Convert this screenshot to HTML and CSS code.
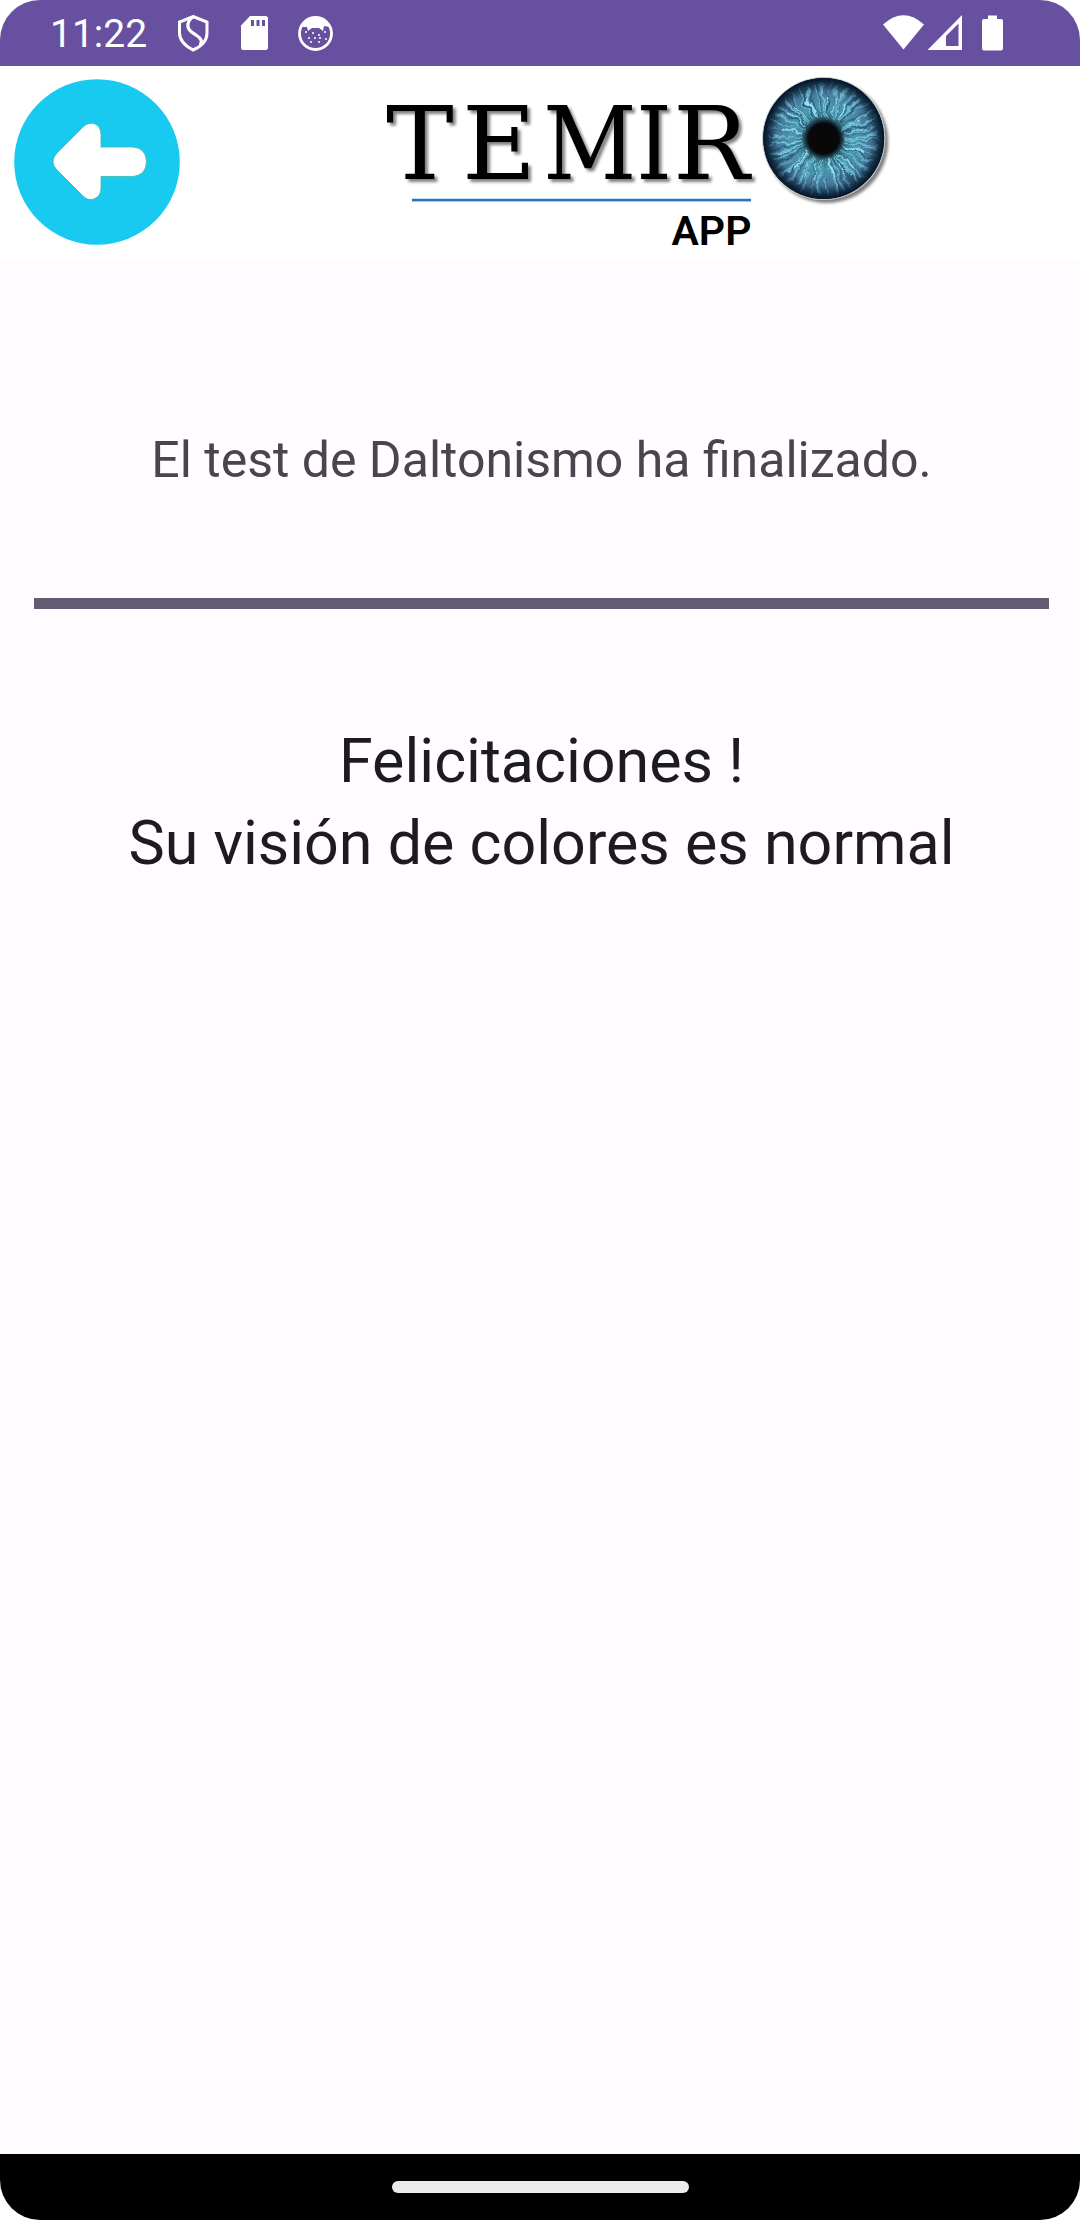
FILE: index.html
```html
<!DOCTYPE html>
<html lang="es">
<head>
<meta charset="utf-8">
<title>Temiro App</title>
<link rel="stylesheet" href="styles.css">
</head>
<body>
<div class="screen">
  <div class="status">
    <span class="time">11:22</span>
    <svg class="left-icons" width="160" height="40" viewBox="174 12 160 40">
      <path d="M193 16.500 L207 22 V33 Q207 44 193 50 Q179.500 43 179.500 33 V22 Z" fill="none" stroke="#fff" stroke-width="3"/>
      <path d="M193 17 Q187 21 188 27 Q189 31 196 35 Q204 40 200 45" fill="none" stroke="#fff" stroke-width="3.200"/>
      <path d="M250 16 H265.500 Q268 16 268 18.500 V47.500 Q268 50 265.500 50 H243.500 Q241 50 241 47.500 V25.500 Z" fill="#fff"/>
      <path d="M251 20h3v6h-3z M256.500 20h3v6h-3z M262 20h3v6h-3z" fill="#6750a0"/>
      <circle cx="315.500" cy="33.500" r="16" fill="none" stroke="#fff" stroke-width="2.800"/>
      <path d="M301 27 Q305 17 315 17 Q327 17 330 27 L324 26 L323 31 L319 28 H312 L308 31 L307 27 Z" fill="#fff"/>
      <path d="M305 32h2m1 6h2m2-5h2m4 2h2m4-3h2m-1 7h2m-9 3h2m-10 0h2m2-4h2m3 0h2" stroke="#fff" stroke-width="1.500"/>
    </svg>
    <svg class="right-icons" width="124" height="40" viewBox="880 12 124 40" fill="#fff">
      <path d="M883 24.500 Q903.500 6 924 24.500 L903.500 49.500 Z"/>
      <path fill-rule="evenodd" d="M927.500 50 L962 15 V50 Z M946 36 V46 H958.500 V23.500 Z"/>
      <path d="M988 15.500 h9 v3.500 h4 q2 0 2 2 v27.500 q0 2-2 2 h-17 q-2 0-2-2 V21 q0-2 2-2 h4 z"/>
    </svg>
  </div>
  <header class="header">
    <svg class="back" width="166" height="166" viewBox="0 0 166 166">
      <circle cx="83" cy="83" r="82.800" fill="#19caf0"/>
      <path d="M87 68.500 V56 Q87 47 80 44.500 Q74 43 69 48 L43 74 Q35 83 43 91 L69 117 Q74 122 80 120 Q87 117 87 109 V97.500 H119 Q132 96 132.500 83 Q132 69 119 68 H87" fill="#fff" stroke="#3cb7a8" stroke-width=".8"/>
    </svg>
    <svg class="logo" width="520" height="184" viewBox="376 70 520 184">
      <defs>
        <filter id="shade" x="-10%" y="-10%" width="125%" height="130%"><feDropShadow dx="3" dy="3" stdDeviation="1.500" flood-color="#000" flood-opacity=".5"/></filter>
        <filter id="fibres" x="-10%" y="-10%" width="120%" height="120%">
          <feTurbulence type="fractalNoise" baseFrequency=".07" numOctaves="3" seed="7" result="n"/>
          <feDisplacementMap in="SourceGraphic" in2="n" scale="12" xChannelSelector="R" yChannelSelector="G"/>
          <feGaussianBlur stdDeviation=".7"/>
        </filter>
        <radialGradient id="iris">
          <stop offset="0" stop-color="#1d4354"/><stop offset=".3" stop-color="#2f6478"/><stop offset=".5" stop-color="#4d99b2"/><stop offset=".72" stop-color="#477f9f"/><stop offset=".88" stop-color="#305a7a"/><stop offset="1" stop-color="#10283c"/>
        </radialGradient>
        <radialGradient id="rim">
          <stop offset=".22" stop-color="#080a0c"/><stop offset=".26" stop-color="#080a0c" stop-opacity=".95"/><stop offset=".36" stop-color="#102630" stop-opacity="0"/><stop offset=".78" stop-color="#0b2338" stop-opacity="0"/><stop offset=".92" stop-color="#0a2035" stop-opacity=".75"/><stop offset="1" stop-color="#051321"/>
        </radialGradient>
        <clipPath id="eye"><circle cx="823.700" cy="138.500" r="60.500"/></clipPath>
      </defs>
      <text class="brand" filter="url(#shade)" x="386" y="179">T<tspan x="462">E</tspan><tspan class="narrow" x="543">M</tspan><tspan class="narrow" x="636">I</tspan><tspan x="673">R</tspan></text>
      <rect x="412" y="198" width="339" height="4" fill="#c5dcef"/>
      <rect x="412" y="199" width="339" height="2.200" fill="#2e75b6"/>
      <text class="app" x="671.500" y="245" textLength="80" lengthAdjust="spacingAndGlyphs">APP</text>
      <circle cx="823.700" cy="138.500" r="61.500" fill="#b9c0c6" filter="url(#shade)"/>
      <g clip-path="url(#eye)">
        <circle cx="823.700" cy="138.500" r="61" fill="url(#iris)"/>
        <g fill="none" filter="url(#fibres)">
          <circle cx="823.700" cy="138.500" r="39" stroke="#244b68" stroke-width="42" stroke-dasharray="1.500 5 1 8 2 4" opacity=".7"/>
          <circle cx="823.700" cy="138.500" r="37" stroke="#76cbe0" stroke-width="34" stroke-dasharray="1 4 2 9 1 3 2 6" opacity=".8"/>
          <circle cx="823.700" cy="138.500" r="32" stroke="#9be9f3" stroke-width="22" stroke-dasharray="1 9 2 13 1 6" opacity=".85"/>
          <circle cx="823.700" cy="138.500" r="48" stroke="#6aa9c6" stroke-width="18" stroke-dasharray="1 5 1.500 7" opacity=".75"/>
        </g>
        <circle cx="823.700" cy="138.500" r="61" fill="url(#rim)"/>
        <circle cx="823.700" cy="138.500" r="15" fill="#080808"/>
      </g>
    </svg>
  </header>
  <main class="content">
    <p class="finished">El test de Daltonismo ha finalizado.</p>
    <div class="divider"></div>
    <p class="result">Felicitaciones !<br>Su visión de colores es normal</p>
  </main>
  <div class="nav"><div class="handle"></div></div>
</div>
</body>
</html>
```
FILE: styles.css
```css
body { margin: 0; background: #fff; }
p { margin: 0; }
.screen { width: 1080px; height: 2220px; display: flex; flex-direction: column; overflow: hidden; border-radius: 40px; background: #fffbff; font-family: Roboto, sans-serif; }
.status { height: 66px; box-sizing: border-box; display: flex; align-items: flex-start; padding: 12px 76px 0 50px; background: #6750a0; }
.time { width: 124px; font-size: 39px; line-height: 45px; color: #fff; }
.right-icons { margin-left: auto; }
.header { height: 193px; box-sizing: border-box; display: flex; align-items: flex-start; padding: 4px 0 0 14px; background: #fff; }
.back { margin-top: 9px; }
.logo { margin-left: 196px; }
.brand { font: 101.500px "DejaVu Serif", serif; fill: #000; }
.narrow { font-family: "DejaVu Serif Condensed", "DejaVu Serif", serif; font-stretch: semi-condensed; }
.app { font: 600 40px Roboto, sans-serif; fill: #000; }
.content { flex: 1; display: flex; flex-direction: column; padding: 0 31px 0 34px; text-align: center; }
.finished { margin-top: 171px; font-size: 50px; line-height: 60px; color: #49454f; }
.divider { height: 11px; margin-top: 108px; background: #635b71; }
.result { margin-top: 111px; font-size: 61px; line-height: 82px; color: #1c1b1f; }
.nav { height: 66px; display: flex; align-items: center; justify-content: center; background: #000; }
.handle { width: 297px; height: 12px; border-radius: 6px; background: #ebebeb; }
```
